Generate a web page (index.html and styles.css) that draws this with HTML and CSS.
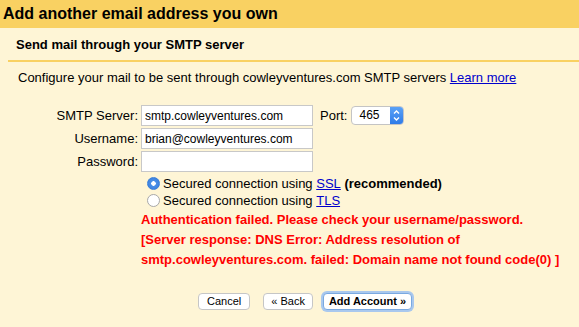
FILE: index.html
```html
<!DOCTYPE html>
<html lang="en">
<head>
  <meta charset="UTF-8">
  <title>Add another email address you own</title>
  <link rel="stylesheet" href="styles.css">
</head>
<body>
  <div class="header">
    <h1>Add another email address you own</h1>
  </div>

  <div class="panel">
    <h2>Send mail through your SMTP server</h2>

    <p class="intro">Configure your mail to be sent through cowleyventures.com SMTP servers <a href="#">Learn more</a></p>

    <div class="form">
      <div class="row">
        <label class="label">SMTP Server:</label>
        <input class="field" type="text" value="smtp.cowleyventures.com">
        <span class="port-label">Port:</span>
        <div class="select">
          <span class="select-value">465</span>
          <span class="select-arrow">
            <svg width="13" height="19" viewBox="0 0 13 19">
              <path d="M4 7.5 L6.5 5 L9 7.5 M4 11.5 L6.5 14 L9 11.5" fill="none" stroke="#fff" stroke-width="1.4"/>
            </svg>
          </span>
        </div>
      </div>
      <div class="row">
        <label class="label">Username:</label>
        <input class="field" type="text" value="brian@cowleyventures.com">
      </div>
      <div class="row">
        <label class="label">Password:</label>
        <input class="field" type="password" value="">
      </div>

      <div class="options">
        <div class="radio-row"><span class="radio checked"></span>Secured connection using&nbsp;<a href="#">SSL</a>&nbsp;<b>(recommended)</b></div>
        <div class="radio-row"><span class="radio"></span>Secured connection using&nbsp;<a href="#">TLS</a></div>
        <div class="error">
          Authentication failed. Please check your username/password.<br>
          [Server response: DNS Error: Address resolution of<br>
          smtp.cowleyventures.com. failed: Domain name not found code(0) ]
        </div>
      </div>
    </div>

    <div class="buttons">
      <button>Cancel</button>
      <button class="back">« Back</button>
      <button class="primary">Add Account »</button>
    </div>
  </div>
</body>
</html>
```

FILE: styles.css
```css
body {
  margin: 0;
  background-color: #fef5d6;
  font-family: 'Liberation Sans', Arial, sans-serif;
  font-size: 13px;
  color: #000;
  height: 327px;
  overflow: hidden;
}
a {
  color: #0000cc;
}
.header {
  background-color: #f9d162;
  height: 28px;
}
h1 {
  margin: 0;
  padding-left: 3px;
  font-size: 16px;
  line-height: 28px;
}
.panel {
  margin-left: 8px;
}
h2 {
  margin: 0;
  padding: 9px 0 7px 8px;
  font-size: 13px;
  line-height: 16px;
  border-bottom: 2px solid #f9d162;
}
.intro {
  margin: 8px 0 0 10px;
  line-height: 16px;
}
.form {
  margin-top: 19px;
}
.row {
  display: flex;
  align-items: center;
  height: 21px;
  margin-bottom: 2px;
}
.label {
  width: 130px;
  text-align: right;
  padding-right: 3px;
}
.field {
  width: 172px;
  height: 21px;
  box-sizing: border-box;
  border: 1px solid #c8c8c8;
  padding: 1px 3px;
  font-family: 'Liberation Sans', Arial, sans-serif;
  font-size: 12px;
  background: #fff;
}
.port-label {
  margin-left: 7px;
}
.select {
  margin-left: 4px;
  width: 53px;
  height: 19px;
  display: flex;
  border: 1px solid #c4c4c4;
  border-radius: 4px;
  box-sizing: border-box;
  background: #fff;
  overflow: hidden;
}
.select-value {
  flex: 1;
  padding-left: 7px;
  font-size: 12px;
  line-height: 17px;
}
.select-arrow {
  width: 13px;
  background: linear-gradient(#5aa2f7, #2f7be8);
  display: flex;
  align-items: center;
  justify-content: center;
}
.options {
  margin-left: 133px;
  margin-top: 3px;
}
.radio-row {
  display: flex;
  align-items: center;
  height: 17px;
  padding-left: 6px;
  white-space: nowrap;
}
.radio {
  width: 11px;
  height: 11px;
  border-radius: 50%;
  border: 1px solid #a8a8a8;
  background: #fff;
  margin-right: 3px;
  box-sizing: content-box;
}
.radio.checked {
  border-color: #3a7fd8;
  background: radial-gradient(circle, #fff 0, #fff 2px, #4a90e6 2.5px, #3479de 100%);
}
.error {
  color: #f00;
  font-weight: bold;
  line-height: 20px;
  margin-top: 1px;
}
.buttons {
  display: flex;
  align-items: center;
  padding-left: 190px;
  margin-top: 23px;
}
button {
  font-family: 'Liberation Sans', Arial, sans-serif;
  font-size: 11px;
  height: 17px;
  padding: 0 8px;
  background: #fff;
  border: 1px solid #c6c6c6;
  border-radius: 4px;
  margin-right: 13px;
  line-height: 15px;
}
.back {
  padding: 0 7px;
  margin-right: 10px;
}
.primary {
  font-weight: bold;
  border-color: #7aa9e0;
  box-shadow: 0 0 0 2px #a9c8ee;
  padding: 0 5px;
}
```
